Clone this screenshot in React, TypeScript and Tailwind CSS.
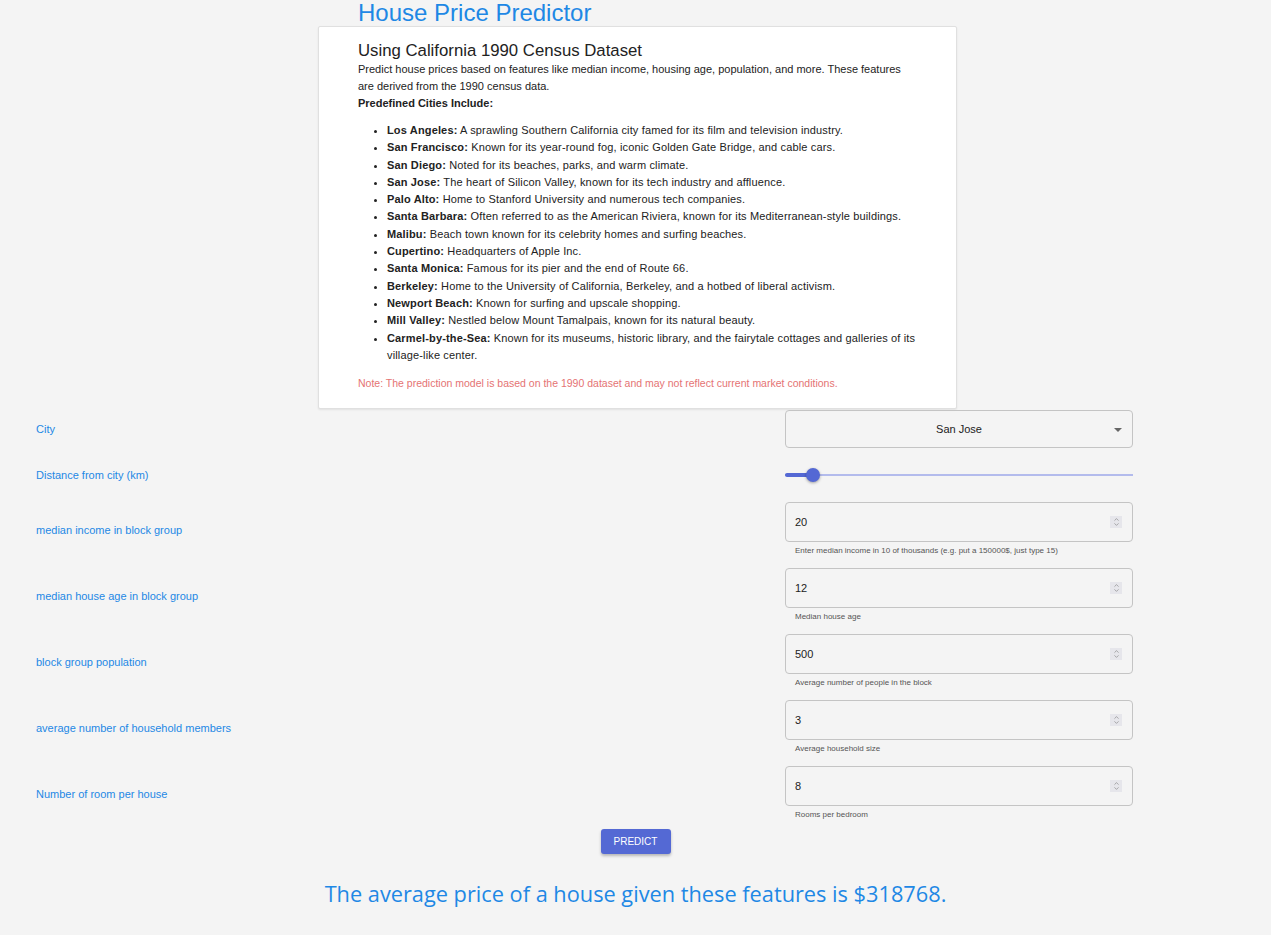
import { ChevronDown, ChevronUp } from 'lucide-react';

const cities: Array<[string, string]> = [
  ['Los Angeles:', 'A sprawling Southern California city famed for its film and television industry.'],
  ['San Francisco:', 'Known for its year-round fog, iconic Golden Gate Bridge, and cable cars.'],
  ['San Diego:', 'Noted for its beaches, parks, and warm climate.'],
  ['San Jose:', 'The heart of Silicon Valley, known for its tech industry and affluence.'],
  ['Palo Alto:', 'Home to Stanford University and numerous tech companies.'],
  ['Santa Barbara:', 'Often referred to as the American Riviera, known for its Mediterranean-style buildings.'],
  ['Malibu:', 'Beach town known for its celebrity homes and surfing beaches.'],
  ['Cupertino:', 'Headquarters of Apple Inc.'],
  ['Santa Monica:', 'Famous for its pier and the end of Route 66.'],
  ['Berkeley:', 'Home to the University of California, Berkeley, and a hotbed of liberal activism.'],
  ['Newport Beach:', 'Known for surfing and upscale shopping.'],
  ['Mill Valley:', 'Nestled below Mount Tamalpais, known for its natural beauty.'],
  ['Carmel-by-the-Sea:', 'Known for its museums, historic library, and the fairytale cottages and galleries of its village-like center.'],
];

const fields = [
  { label: 'median income in block group', value: '20', help: 'Enter median income in 10 of thousands (e.g. put a 150000$, just type 15)' },
  { label: 'median house age in block group', value: '12', help: 'Median house age' },
  { label: 'block group population', value: '500', help: 'Average number of people in the block' },
  { label: 'average number of household members', value: '3', help: 'Average household size' },
  { label: 'Number of room per house', value: '8', help: 'Rooms per bedroom' },
];

function Row({ label, children }: { label: string; children: React.ReactNode }) {
  return (
    <div className="flex items-center justify-between pl-[36px] pr-[138px]">
      <span className="text-[11px] text-[#1e88e5]">{label}</span>
      <div className="w-[348px]">{children}</div>
    </div>
  );
}

export default function App() {
  return (
    <div className="min-h-screen bg-[#f4f4f4] pb-[20px] font-['Liberation_Sans',Arial,sans-serif]">
      <div className="mx-auto w-[643px] pl-[4px]">
        <h1 className="pl-[40px] text-[24px] leading-[26px] text-[#1e88e5]">House Price Predictor</h1>
        <div className="rounded-[2px] border border-[#e0e0e0] bg-white px-[39px] pb-[16px] pt-[13px] text-[#222] shadow-[0_1px_2px_rgba(0,0,0,0.08)]">
          <h2 className="text-[16.75px] leading-[21px] text-[#222]">Using California 1990 Census Dataset</h2>
          <p className="pr-[14px] text-[11px] leading-[17px]">
            Predict house prices based on features like median income, housing age, population, and more. These features are derived from the 1990 census data.
          </p>
          <p className="text-[11px] font-bold leading-[17px]">Predefined Cities Include:</p>
          <ul className="mt-[10px] list-disc pl-[29px] text-[11px] leading-[17.3px] tracking-[0.15px]">
            {cities.map(([name, text]) => (
              <li key={name}>
                <strong>{name}</strong> {text}
              </li>
            ))}
          </ul>
          <p className="mt-[11px] text-[10.5px] leading-[17px] text-[#e57373]">
            Note: The prediction model is based on the 1990 dataset and may not reflect current market conditions.
          </p>
        </div>
      </div>

      <div className="mt-[1px] flex flex-col">
        <Row label="City">
          <div className="relative flex h-[38px] items-center justify-center rounded-[4px] border border-[#c4c4c4] text-[11px] text-[#222]">
            San Jose
            <span className="absolute right-[10px] top-[17px] h-0 w-0 border-x-[4px] border-t-[4px] border-x-transparent border-t-[#666]" />
          </div>
        </Row>

        <div className="mt-[12px]">
          <Row label="Distance from city (km)">
            <div className="relative flex h-[30px] items-center">
              <div className="h-[2px] w-full bg-[#b3bbec]" />
              <div className="absolute left-0 top-[13px] h-[4px] w-[28px] rounded-l-full bg-[#5468d4]" />
              <div className="absolute left-[21px] top-[8px] h-[14px] w-[14px] rounded-full bg-[#5468d4] shadow-[0_1px_3px_rgba(0,0,0,0.35)]" />
            </div>
          </Row>
        </div>

        <div className="mt-[12px] flex flex-col gap-[9px]">
          {fields.map((f) => (
            <Row key={f.label} label={f.label}>
              <div className="h-[57px]">
                <div className="relative flex h-[40px] items-center rounded-[4px] border border-[#c4c4c4] pl-[9px] text-[11px] text-[#222]">
                  {f.value}
                  <span className="absolute right-[10px] top-[13px] flex h-[12px] w-[12px] flex-col items-center justify-center bg-[#e6e6eb] text-[#777]">
                    <ChevronUp size={7} strokeWidth={2} className="-mb-[1px]" />
                    <ChevronDown size={7} strokeWidth={2} className="-mt-[1px]" />
                  </span>
                </div>
                <p className="mt-[3px] pl-[10px] text-[8px] leading-[12px] text-[#555]">{f.help}</p>
              </div>
            </Row>
          ))}
        </div>
      </div>

      <div className="mt-[6px] flex justify-center">
        <button
          type="button"
          className="h-[25px] w-[70px] rounded-[3px] bg-[#5469d4] text-[10px] uppercase text-white shadow-[0_2px_3px_rgba(0,0,0,0.25)]"
        >
          Predict
        </button>
      </div>

      <p className="mt-[24px] text-center font-['Open_Sans',sans-serif] text-[21.75px] text-[#1e88e5]">
        The average price of a house given these features is $318768.
      </p>
    </div>
  );
}
